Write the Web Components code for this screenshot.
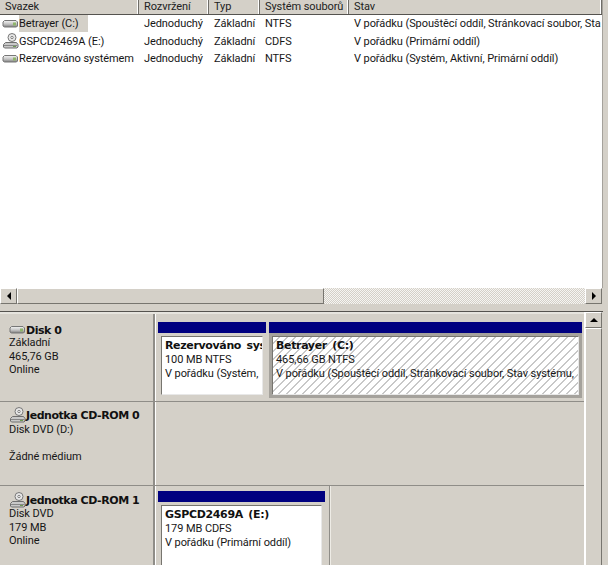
<!DOCTYPE html>
<html lang="cs"><head><meta charset="utf-8"><title>Správa disků</title>
<style>
html,body{margin:0;padding:0;background:#fff}
body{width:608px;height:565px;overflow:hidden;font:11px Roboto,"Liberation Sans",sans-serif;letter-spacing:-.08px;color:#111}
disk-app{display:block;height:565px}
</style></head><body>
<template id="t-hdd"><style>:host{display:inline-block;width:17px;height:16px;flex:none}svg{display:block}</style>
<svg width="17" height="16" viewBox="0 0 17 16"><defs><linearGradient id="g" x1="0" y1="0" x2="0" y2="1"><stop offset="0" stop-color="#f4f4f4"/><stop offset=".55" stop-color="#c4c4c4"/><stop offset="1" stop-color="#7d7d7d"/></linearGradient></defs><path d="M2.500 4.500h11.500l1.500 1.500v4l-1 1H2.500l-1.500-1V6z" fill="url(#g)" stroke="#777"/><rect x="11" y="6.500" width="3" height="3" fill="#8fb56a"/></svg></template>
<template id="t-cd"><style>:host{display:inline-block;width:17px;height:16px;flex:none}svg{display:block}</style>
<svg width="17" height="16" viewBox="0 0 17 16"><circle cx="10" cy="4.500" r="4" fill="#e8e8e8" stroke="#777"/><circle cx="10" cy="4.500" r="1.200" fill="#fff" stroke="#555" stroke-width=".7"/><path d="M3.500 9.500h11l1.500 2v2.500l-1 1H2.500l-1-1v-2.500z" fill="#c9c9c9" stroke="#6f6f6f"/><path d="M2 12.500h13" stroke="#888"/><rect x="11" y="13" width="3" height="1" fill="#6c9a50"/></svg></template>

<script>
const tpl=(html)=>{const t=document.createElement('template');t.innerHTML=html;return t};
class Base extends HTMLElement{
 constructor(){super();this.attachShadow({mode:'open'}).append(this.constructor.t.content.cloneNode(true))}
}
const def=(name,html)=>{const C=class extends Base{};C.t=tpl(html);customElements.define(name,C)};

class IconEl extends HTMLElement{
 constructor(){super();this.attachShadow({mode:'open'})}
 connectedCallback(){if(!this.shadowRoot.firstChild)this.shadowRoot.append(document.getElementById(this.getAttribute('kind')==='cd'?'t-cd':'t-hdd').content.cloneNode(true))}
}
customElements.define('drive-icon',IconEl);

const COLS='139px 70px 51px 89px 1fr';
def('head-cell',`<style>:host{display:block;box-sizing:border-box;height:14px;padding:0 0 0 5px;background:#d4d0c8;border-right:1px solid #6f6d68;box-shadow:inset -1px 0 #fff;line-height:13px;overflow:hidden;white-space:nowrap;color:#222}</style><slot></slot>`);
def('list-head',`<style>:host{display:grid;grid-template-columns:${COLS};height:15px;box-sizing:border-box;background:#d4d0c8;border-bottom:1px solid #55534f}</style><slot></slot>`);
def('list-row',`<style>:host{display:grid;grid-template-columns:${COLS};height:17.5px;line-height:17px;white-space:nowrap;color:#161616}</style><slot></slot>`);
def('list-cell',`<style>:host{display:block;padding-left:5px;overflow:hidden;white-space:nowrap}:host([first]){padding-left:2px;display:flex;align-items:center}</style><slot></slot>`);
def('sel-text',`<style>:host{display:inline-block;background:#d4d0c8;line-height:17px;padding-right:9px}:host([plain]){background:none}</style><slot></slot>`);

def('sb-button',`<style>:host{display:flex;align-items:center;justify-content:center;box-sizing:border-box;width:17px;height:16px;flex:none;background:#d4d0c8;border:1px solid;border-color:#fff #77756f #77756f #fff}i{width:0;height:0;border:4px solid transparent}:host([dir=l]) i{border-left:0;border-right-color:#000}:host([dir=r]) i{border-right:0;border-left-color:#000}:host([dir=u]) i{border-top:0;border-bottom-color:#000}</style><i></i>`);
def('h-scroll',`<style>:host{display:flex;height:16px;background:repeating-conic-gradient(#d4d0c8 0 25%,#f6f5f2 0 50%) 0 0/2px 2px}b{display:block;width:307px;box-sizing:border-box;border:1px solid;border-color:#fff #77756f #77756f #fff;background:#d4d0c8}u{flex:1}</style><sb-button dir="l"></sb-button><b></b><u></u><sb-button dir="r"></sb-button>`);
def('v-scroll',`<style>:host{display:flex;flex-direction:column;width:17px;flex:none;background:#d4d0c8;border-left:1px solid #fff}b{display:block;flex:1;box-sizing:border-box;border:1px solid;border-color:#fff #77756f #77756f #fff;background:#d4d0c8}</style><sb-button dir="u"></sb-button><b></b>`);

def('vol-box',`<style>
:host{display:flex;flex-direction:column;box-sizing:border-box;flex:none;min-width:0;width:var(--w);height:var(--h,auto)}
.bar{height:11px;background:#000080;flex:none}
.frame{flex:1;background:#a5a29c;padding:3px;min-height:0;display:flex}
:host([light]) .frame{background:#d4d0c8}
.in{flex:1;box-sizing:border-box;border:1px solid;border-color:#77756f #e8e8e8 #e8e8e8 #77756f;background:#fff;padding:2px 3px;line-height:13.500px;white-space:nowrap;overflow:hidden;color:#161616;min-width:0}
:host([hatch]) .in{background:repeating-linear-gradient(135deg,#fff 0 4px,#c8c8c8 4px 5px,#fff 5px 5.66px)}
b{display:block;font:bold 11px "DejaVu Sans",sans-serif;letter-spacing:-.35px;line-height:14px;color:#111;word-spacing:2px}
span{display:block}
</style><div class="bar"></div><div class="frame"><div class="in"><b><slot name="t"></slot></b><span><slot name="a"></slot></span><span><slot name="b"></slot></span></div></div>`);

def('vol-end',`<style>:host{display:block;flex:none;width:1px;margin:calc(-1 * var(--vt,8px)) 0 0 1px;background:#8f8d88;box-shadow:1px 0 #eeece6}</style>`);

def('disk-row',`<style>
:host{display:grid;grid-template-columns:155px 1fr;height:var(--row);box-sizing:border-box;border-bottom:1px solid #8f8d88;background:#d4d0c8}
.lab{box-sizing:border-box;padding:var(--pt,8px) 0 0 9px;border-right:2px solid #8f8d88;box-shadow:1px 0 #fff;line-height:13.600px;color:#161616;overflow:hidden}
.t{display:flex;align-items:center;height:16px;font:bold 11px "DejaVu Sans",sans-serif;letter-spacing:-.45px;color:#111;margin-bottom:var(--mb,-2px)}
.vols{display:flex;gap:3px;padding:var(--vt,8px) 0 0 3px;align-items:stretch;min-width:0}
</style><div class="lab"><div class="t"><slot name="icon"></slot><slot name="title"></slot></div><slot name="info"></slot></div><div class="vols"><slot></slot></div>`);

def('disk-app',`<style>
:host{display:flex;flex-direction:column;height:565px;background:#d4d0c8}
.top{flex:none;height:288px;background:#fff;margin-right:5px;overflow:hidden;border-right:1px solid #a5a29c}
.hs{flex:none;margin-right:6px}
.split{flex:none;height:8px;background:#d4d0c8;border-bottom:1px solid #55534f;box-sizing:border-box;margin-right:5px}
.low{flex:1;display:flex;min-height:0;margin-right:6px;overflow:hidden}
.rows{flex:1;min-width:0;border-top:2px solid #e6e4de}
</style><div class="top"><slot name="list"></slot></div><div class="hs"><slot name="hs"></slot></div><div class="split"></div><div class="low"><div class="rows"><slot></slot></div><v-scroll></v-scroll></div>`);
</script>

<disk-app>
 <div slot="list">
  <list-head><head-cell>Svazek</head-cell><head-cell>Rozvržení</head-cell><head-cell>Typ</head-cell><head-cell>Systém souborů</head-cell><head-cell>Stav</head-cell></list-head>
  <list-row><list-cell first><drive-icon></drive-icon><sel-text>Betrayer (C:)</sel-text></list-cell><list-cell>Jednoduchý</list-cell><list-cell>Základní</list-cell><list-cell>NTFS</list-cell><list-cell>V pořádku (Spouštěcí oddíl, Stránkovací soubor, Sta</list-cell></list-row>
  <list-row><list-cell first><drive-icon kind="cd"></drive-icon><sel-text plain>GSPCD2469A (E:)</sel-text></list-cell><list-cell>Jednoduchý</list-cell><list-cell>Základní</list-cell><list-cell>CDFS</list-cell><list-cell>V pořádku (Primární oddíl)</list-cell></list-row>
  <list-row><list-cell first><drive-icon></drive-icon><sel-text plain>Rezervováno systémem</sel-text></list-cell><list-cell>Jednoduchý</list-cell><list-cell>Základní</list-cell><list-cell>NTFS</list-cell><list-cell>V pořádku (Systém, Aktivní, Primární oddíl)</list-cell></list-row>
 </div>
 <h-scroll slot="hs"></h-scroll>
 <disk-row style="--row:88px">
  <drive-icon slot="icon"></drive-icon><span slot="title">Disk 0</span>
  <div slot="info">Základní<br>465,76 GB<br>Online</div>
  <vol-box light style="--w:108px;--h:76px"><span slot="t">Rezervováno sys</span><span slot="a">100 MB NTFS</span><span slot="b">V pořádku (Systém,</span></vol-box>
  <vol-box hatch style="--w:313px;--h:76px"><span slot="t">Betrayer (C:)</span><span slot="a">465,66 GB NTFS</span><span slot="b">V pořádku (Spouštěcí oddíl, Stránkovací soubor, Stav systému,</span></vol-box>
 </disk-row>
 <disk-row style="--row:84px;--pt:5px;--mb:0px">
  <drive-icon slot="icon" kind="cd"></drive-icon><span slot="title">Jednotka CD-ROM 0</span>
  <div slot="info">Disk DVD (D:)<br><br>Žádné médium</div>
 </disk-row>
 <disk-row style="--row:90px;--pt:6px;--mb:-1px;--vt:5px">
  <drive-icon slot="icon" kind="cd"></drive-icon><span slot="title">Jednotka CD-ROM 1</span>
  <div slot="info">Disk DVD<br>179 MB<br>Online</div>
  <vol-box light style="--w:167px;--h:82px"><span slot="t">GSPCD2469A (E:)</span><span slot="a">179 MB CDFS</span><span slot="b">V pořádku (Primární oddíl)</span></vol-box>
  <vol-end></vol-end>
 </disk-row>
</disk-app>
</body></html>
